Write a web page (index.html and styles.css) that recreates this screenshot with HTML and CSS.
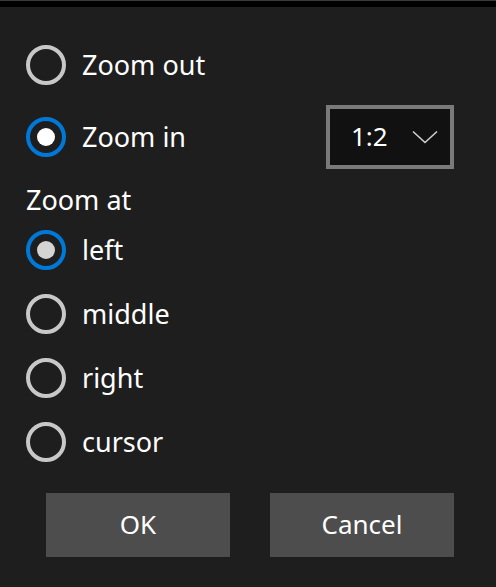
FILE: index.html
```html
<!DOCTYPE html>
<html lang="en">
<head>
<meta charset="utf-8">
<title>Zoom</title>
<link rel="stylesheet" href="styles.css">
</head>
<body>
<div class="topbar"></div>
<div class="dialog">
  <div class="row first">
    <span class="radio"></span>
    <span class="label">Zoom out</span>
  </div>
  <div class="row split">
    <div class="opt">
      <span class="radio checked"></span>
      <span class="label">Zoom in</span>
    </div>
    <div class="select">
      <span class="select-value">1:2</span>
      <svg class="chevron" width="26" height="14" viewBox="0 0 26 14"><path d="M1 1.5 L13 12.5 L25 1.5" fill="none" stroke="#d0d0d0" stroke-width="1.6"/></svg>
    </div>
  </div>
  <div class="group-label">Zoom at</div>
  <div class="row">
    <span class="radio checked pressed"></span>
    <span class="label">left</span>
  </div>
  <div class="row">
    <span class="radio"></span>
    <span class="label">middle</span>
  </div>
  <div class="row">
    <span class="radio"></span>
    <span class="label">right</span>
  </div>
  <div class="row">
    <span class="radio"></span>
    <span class="label">cursor</span>
  </div>
  <div class="buttons">
    <button class="btn">OK</button>
    <button class="btn">Cancel</button>
  </div>
</div>
</body>
</html>
```
FILE: styles.css
```css
html, body {
  margin: 0;
  padding: 0;
  background: #1e1e1e;
  color: #ffffff;
  font-family: "Noto Sans", "Open Sans", sans-serif;
  font-size: 27px;
  height: 100%;
  overflow: hidden;
}

.topbar {
  height: 6px;
  background: #000000;
  border-top: 1px solid #3a3a3a;
}

.dialog {
  padding: 26px 42px 0 26px;
  display: flex;
  flex-direction: column;
}

.row {
  height: 64px;
  display: flex;
  align-items: center;
  gap: 16px;
}

.row.first {
  margin-bottom: 8px;
}

.row.split {
  justify-content: space-between;
}

.opt {
  display: flex;
  align-items: center;
  gap: 16px;
}

.radio {
  box-sizing: border-box;
  width: 40px;
  height: 40px;
  border: 4px solid #c8c8c8;
  border-radius: 50%;
  display: flex;
  align-items: center;
  justify-content: center;
  flex: none;
}

.radio.checked {
  border-color: #0078d7;
}

.radio.checked::after {
  content: "";
  width: 18px;
  height: 18px;
  border-radius: 50%;
  background: #ffffff;
}

.radio.pressed::after {
  background: #d4d4d4;
}

.label {
  line-height: 1;
  padding-bottom: 2px;
}

.select {
  box-sizing: border-box;
  width: 128px;
  height: 64px;
  border: 4px solid #7a7a7a;
  background: #111111;
  display: flex;
  align-items: center;
  padding-left: 21px;
  gap: 24px;
}

.select-value {
  font-size: 26px;
  line-height: 1;
  padding-bottom: 2px;
}

.chevron {
  display: block;
}

.group-label {
  height: 49px;
  display: flex;
  align-items: center;
  line-height: 1;
  padding-top: 11px;
  box-sizing: border-box;
}

.buttons {
  display: flex;
  gap: 40px;
  margin: 19px 0 0 20px;
}

.btn {
  width: 184px;
  height: 64px;
  border: none;
  background: #4d4d4d;
  color: #ffffff;
  font-family: inherit;
  font-size: 26px;
  padding: 0 0 2px 0;
}
```
